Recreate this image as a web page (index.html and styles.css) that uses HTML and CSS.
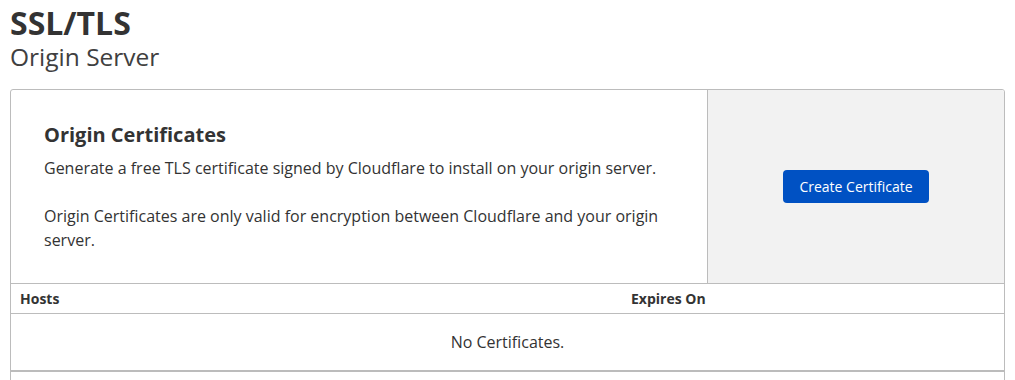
FILE: index.html
```html
<!DOCTYPE html>
<html lang="en">
<head>
  <meta charset="UTF-8" />
  <title>SSL/TLS - Origin Server</title>
  <link rel="stylesheet" href="styles.css">
</head>
<body>

  <div class="page-header">
    <h1>SSL/TLS</h1>
    <h2>Origin Server</h2>
  </div>

  <div class="card">
    <div class="card-top">
      <div class="card-body">
        <h3>Origin Certificates</h3>
        <p>Generate a free TLS certificate signed by Cloudflare to install on your origin server.</p>
        <p>Origin Certificates are only valid for encryption between Cloudflare and your origin server.</p>
      </div>
      <div class="card-action">
        <button class="btn-primary">Create Certificate</button>
      </div>
    </div>

    <div class="table">
      <div class="table-head">
        <div class="col-hosts">Hosts</div>
        <div class="col-expires">Expires On</div>
      </div>
      <div class="table-empty">No Certificates.</div>
    </div>
    <div class="card-foot"></div>
  </div>

</body>
</html>
```

FILE: styles.css
```css
:root {
  --text: #333;
  --muted: #404040;
  --border: #bcbcbc;
  --panel: #f2f2f2;
  --accent: #0051c3;
}

* {
  margin: 0; padding: 0; box-sizing: border-box;
}

body {
  font-family: 'Open Sans', 'Noto Sans', sans-serif;
  color: var(--text);
  background: #fff;
  padding: 0 10px;
  overflow: hidden;
}

.page-header {
  padding-top: 4px;
  margin-bottom: 17px;
}

.page-header h1 {
  font-size: 32px;
  font-weight: 700;
  line-height: 38px;
  color: #333;
}

.page-header h2 {
  font-size: 24.5px;
  font-weight: 400;
  line-height: 30px;
  color: var(--muted);
}

.card {
  border: 1px solid var(--border);
  border-radius: 3px;
  overflow: hidden;
}

.card-top {
  display: flex;
  border-bottom: 1px solid var(--border);
}

.card-body {
  flex: 1;
  padding: 31px 33px 31px;
  font-size: 16px;
  line-height: 24px;
}

.card-body h3 {
  font-size: 20px;
  font-weight: 700;
  line-height: 28px;
  margin-bottom: 7px;
}

.card-body p + p {
  margin-top: 24px;
}

.card-action {
  width: 297px;
  background: var(--panel);
  border-left: 1px solid var(--border);
  display: flex;
  align-items: center;
  justify-content: center;
}

.btn-primary {
  font-family: inherit;
  font-size: 14px;
  color: #fff;
  background: var(--accent);
  border: none;
  border-radius: 4px;
  height: 33px;
  padding: 0 16px;
  cursor: pointer;
}

.table-head {
  display: grid;
  grid-template-columns: 611px 1fr;
  border-bottom: 1px solid var(--border);
  font-size: 14px;
  font-weight: 700;
  height: 30px;
  align-items: center;
}

.table-head > div {
  padding: 0 9px;
}

.table-empty {
  height: 58px;
  display: flex;
  align-items: center;
  justify-content: center;
  font-size: 16px;
  border-bottom: 2px solid var(--border);
}

.card-foot {
  height: 20px;
}
```
